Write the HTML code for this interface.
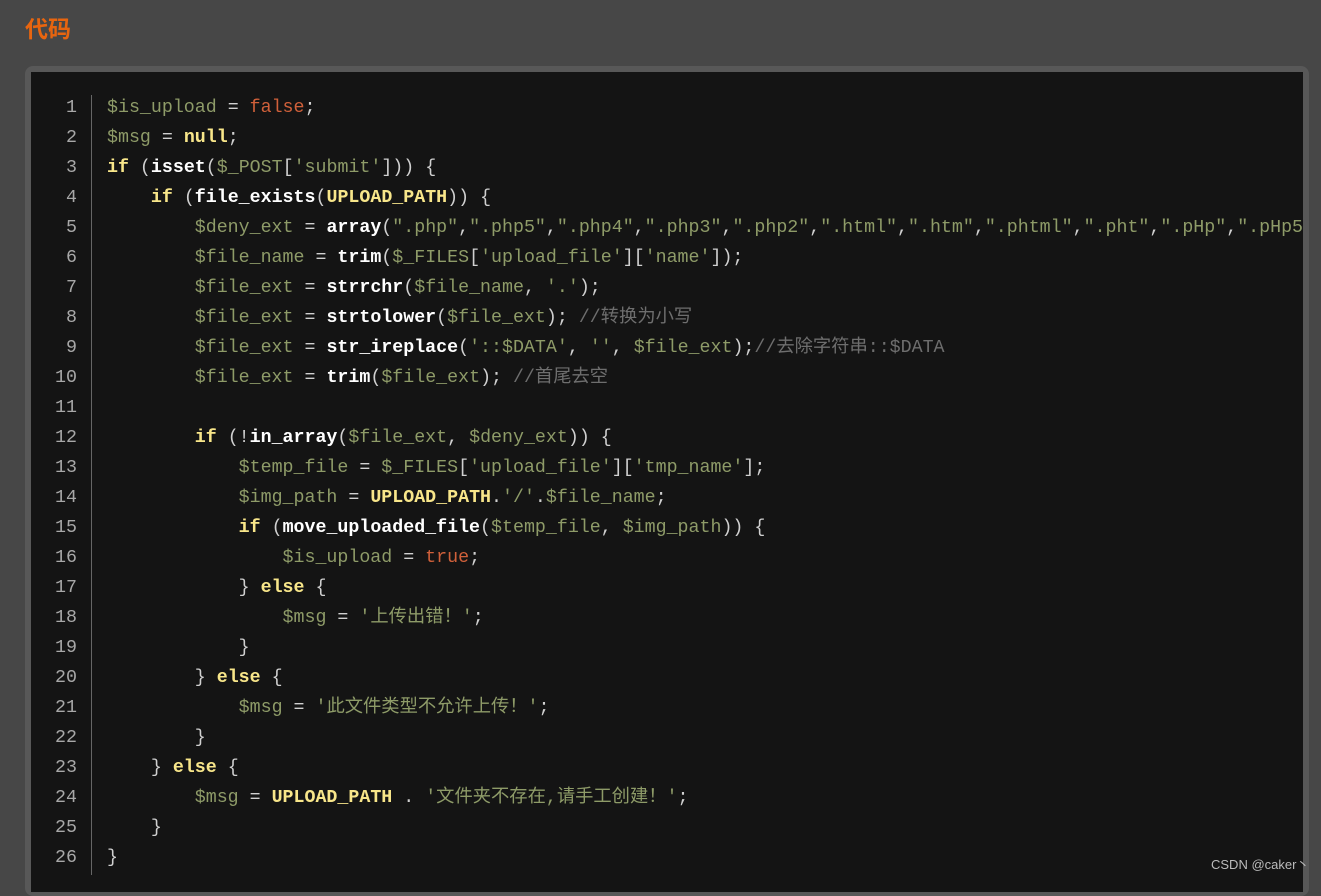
<!DOCTYPE html>
<html><head><meta charset="utf-8"><style>
body{margin:0;width:1321px;height:878px;background:#474747;overflow:hidden;position:relative;font-family:"Liberation Sans","Noto Sans CJK SC",sans-serif}
h2{position:absolute;left:25px;top:13px;margin:0;font-size:23px;color:#e8650f;font-weight:bold;line-height:32px}
.frame{position:absolute;left:25px;top:66px;width:1284px;height:830px;background:#585858;border-radius:8px}
.code{position:absolute;left:31px;top:72px;width:1272px;height:820px;background:#141414;overflow:hidden}
.ln{position:absolute;left:0;top:21px;width:46px;text-align:right;font-family:"Liberation Mono",monospace;font-size:18.3px;line-height:30px;color:#a8a8a8}
.sep{position:absolute;left:60px;top:23px;width:1px;height:780px;background:#666}
pre{position:absolute;left:76px;top:21px;margin:0;font-family:"Liberation Mono","Noto Sans CJK SC",monospace;font-size:18.3px;line-height:30px;color:#d0d0d0;white-space:pre}
.v{color:#8e9b68}.s{color:#8e9b68}.k{color:#f8e68a;font-weight:bold}.f{color:#fff;font-weight:bold}.b{color:#d0603a}.c{color:#6e6e6e}
.wm{position:absolute;left:1211px;top:854px;font-size:13px;color:#bbb}
</style></head><body>
<h2>代码</h2>
<div class="frame"></div>
<div class="code">
<div class="ln">1<br>2<br>3<br>4<br>5<br>6<br>7<br>8<br>9<br>10<br>11<br>12<br>13<br>14<br>15<br>16<br>17<br>18<br>19<br>20<br>21<br>22<br>23<br>24<br>25<br>26</div>
<div class="sep"></div>
<pre><span class="v">$is_upload</span> = <span class="b">false</span>;
<span class="v">$msg</span> = <span class="k">null</span>;
<span class="k">if</span> (<span class="f">isset</span>(<span class="v">$_POST</span>[<span class="s">'submit'</span>])) {
    <span class="k">if</span> (<span class="f">file_exists</span>(<span class="k">UPLOAD_PATH</span>)) {
        <span class="v">$deny_ext</span> = <span class="f">array</span>(<span class="s">".php"</span>,<span class="s">".php5"</span>,<span class="s">".php4"</span>,<span class="s">".php3"</span>,<span class="s">".php2"</span>,<span class="s">".html"</span>,<span class="s">".htm"</span>,<span class="s">".phtml"</span>,<span class="s">".pht"</span>,<span class="s">".pHp"</span>,<span class="s">".pHp5"</span>
        <span class="v">$file_name</span> = <span class="f">trim</span>(<span class="v">$_FILES</span>[<span class="s">'upload_file'</span>][<span class="s">'name'</span>]);
        <span class="v">$file_ext</span> = <span class="f">strrchr</span>(<span class="v">$file_name</span>, <span class="s">'.'</span>);
        <span class="v">$file_ext</span> = <span class="f">strtolower</span>(<span class="v">$file_ext</span>); <span class="c">//转换为小写</span>
        <span class="v">$file_ext</span> = <span class="f">str_ireplace</span>(<span class="s">'::$DATA'</span>, <span class="s">''</span>, <span class="v">$file_ext</span>);<span class="c">//去除字符串::$DATA</span>
        <span class="v">$file_ext</span> = <span class="f">trim</span>(<span class="v">$file_ext</span>); <span class="c">//首尾去空</span>

        <span class="k">if</span> (!<span class="f">in_array</span>(<span class="v">$file_ext</span>, <span class="v">$deny_ext</span>)) {
            <span class="v">$temp_file</span> = <span class="v">$_FILES</span>[<span class="s">'upload_file'</span>][<span class="s">'tmp_name'</span>];
            <span class="v">$img_path</span> = <span class="k">UPLOAD_PATH</span>.<span class="s">'/'</span>.<span class="v">$file_name</span>;
            <span class="k">if</span> (<span class="f">move_uploaded_file</span>(<span class="v">$temp_file</span>, <span class="v">$img_path</span>)) {
                <span class="v">$is_upload</span> = <span class="b">true</span>;
            } <span class="k">else</span> {
                <span class="v">$msg</span> = <span class="s">'上传出错！'</span>;
            }
        } <span class="k">else</span> {
            <span class="v">$msg</span> = <span class="s">'此文件类型不允许上传！'</span>;
        }
    } <span class="k">else</span> {
        <span class="v">$msg</span> = <span class="k">UPLOAD_PATH</span> . <span class="s">'文件夹不存在,请手工创建！'</span>;
    }
}</pre>
</div>
<div class="wm">CSDN @caker丶</div>
</body></html>
